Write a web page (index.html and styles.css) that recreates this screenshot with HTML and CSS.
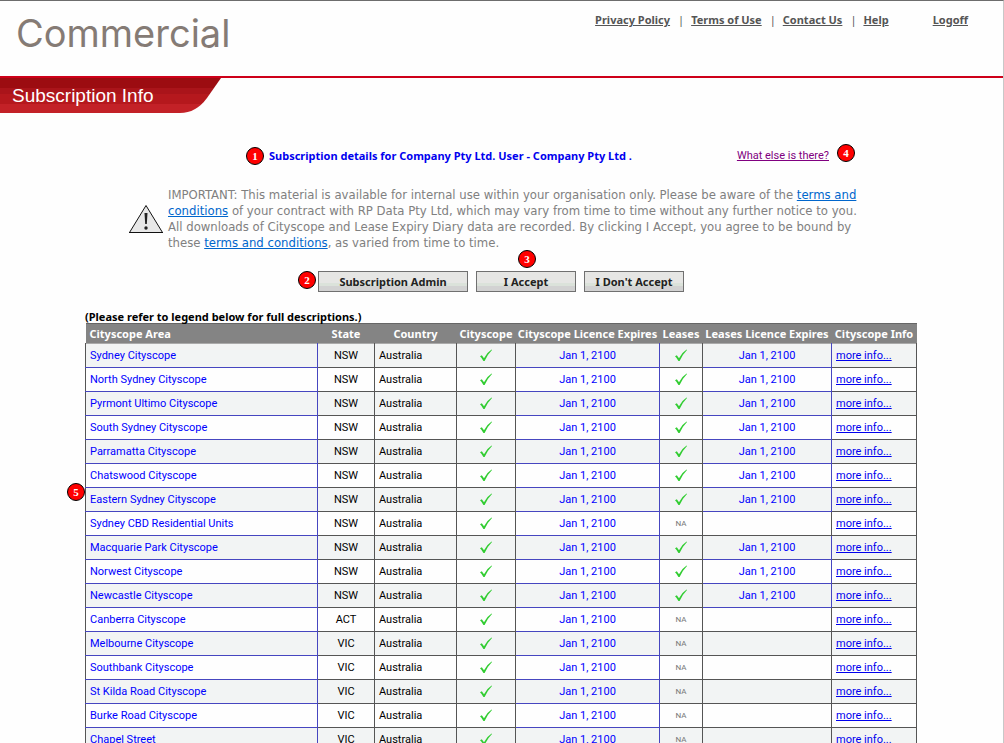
FILE: index.html
```html
<!DOCTYPE html>
<html lang="en">
  <head>
    <meta charset="utf-8">
    <title>Subscription Info</title>
    <link rel="stylesheet" href="styles.css">
  </head>
  <body>
    <svg class="sprite" aria-hidden="true">
      <symbol id="tick" viewBox="0 0 14 13">
        <path d="M1 7.2 2.8 6.2 5 9.2Q8 3.5 12.6 .6L13 1Q8.500 5.500 5.600 12H4.400Q3 9 1 7.200Z" fill="#32cd32" />
      </symbol>
    </svg>

    <header class="header">
      <div class="logo">Commercial</div>
      <nav class="nav">
        <a href="#">Privacy Policy</a>
        <span>|</span>
        <a href="#">Terms of Use</a>
        <span>|</span>
        <a href="#">Contact Us</a>
        <span>|</span>
        <a href="#">Help</a>
        <a class="logoff" href="#">Logoff</a>
      </nav>
    </header>

    <h1 class="page-tab">Subscription Info</h1>

    <main class="container">
      <div class="details">
        <h2><span class="badge left">1</span>Subscription details for Company Pty Ltd. User - Company Pty Ltd .</h2>
        <a href="#">What else is there?<span class="badge right">4</span></a>
      </div>

      <div class="notice">
        <svg width="36" height="31" viewBox="0 0 36 31" aria-hidden="true">
          <path d="M18 1.500 34.500 28.500H1.500Z" fill="#e8e8e8" stroke="#111" />
          <path d="M1 28.500H35" stroke="#111" stroke-width="1" />
          <path d="M16.500 9h3l-.7 11h-1.600z" fill="#222" />
          <circle cx="18" cy="24" r="1.700" fill="#222" />
        </svg>
        <p>IMPORTANT: This material is available for internal use within your organisation only. Please be aware of the <a href="#">terms and conditions</a> of your contract with RP Data Pty Ltd, which may vary from time to time without any further notice to you. All downloads of Cityscope and Lease Expiry Diary data are recorded. By clicking I Accept, you agree to be bound by these <a href="#">terms and conditions</a>, as varied from time to time.</p>
      </div>

      <div class="actions">
        <button class="wide" type="button"><span class="badge left">2</span>Subscription Admin</button>
        <button type="button"><span class="badge above">3</span>I Accept</button>
        <button type="button">I Don't Accept</button>
      </div>

      <table class="areas">
        <caption>(Please refer to legend below for full descriptions.)</caption>
        <colgroup>
          <col class="col-area"><col class="col-state"><col class="col-country"><col class="col-city">
          <col class="col-expires"><col class="col-leases"><col class="col-lease-expires"><col class="col-info">
        </colgroup>
        <thead>
          <tr><th class="area">Cityscope Area</th><th>State</th><th>Country</th><th>Cityscope</th><th>Cityscope Licence Expires</th><th>Leases</th><th>Leases Licence Expires</th><th>Cityscope Info</th></tr>
        </thead>
        <tbody>
          <tr><td class="area">Sydney Cityscope</td><td>NSW</td><td class="country">Australia</td><td><svg class="tick"><use href="#tick" /></svg></td><td class="date">Jan 1, 2100</td><td><svg class="tick"><use href="#tick" /></svg></td><td class="date">Jan 1, 2100</td><td class="info"><a href="#">more info...</a></td></tr>
          <tr><td class="area">North Sydney Cityscope</td><td>NSW</td><td class="country">Australia</td><td><svg class="tick"><use href="#tick" /></svg></td><td class="date">Jan 1, 2100</td><td><svg class="tick"><use href="#tick" /></svg></td><td class="date">Jan 1, 2100</td><td class="info"><a href="#">more info...</a></td></tr>
          <tr><td class="area">Pyrmont Ultimo Cityscope</td><td>NSW</td><td class="country">Australia</td><td><svg class="tick"><use href="#tick" /></svg></td><td class="date">Jan 1, 2100</td><td><svg class="tick"><use href="#tick" /></svg></td><td class="date">Jan 1, 2100</td><td class="info"><a href="#">more info...</a></td></tr>
          <tr><td class="area">South Sydney Cityscope</td><td>NSW</td><td class="country">Australia</td><td><svg class="tick"><use href="#tick" /></svg></td><td class="date">Jan 1, 2100</td><td><svg class="tick"><use href="#tick" /></svg></td><td class="date">Jan 1, 2100</td><td class="info"><a href="#">more info...</a></td></tr>
          <tr><td class="area">Parramatta Cityscope</td><td>NSW</td><td class="country">Australia</td><td><svg class="tick"><use href="#tick" /></svg></td><td class="date">Jan 1, 2100</td><td><svg class="tick"><use href="#tick" /></svg></td><td class="date">Jan 1, 2100</td><td class="info"><a href="#">more info...</a></td></tr>
          <tr><td class="area">Chatswood Cityscope</td><td>NSW</td><td class="country">Australia</td><td><svg class="tick"><use href="#tick" /></svg></td><td class="date">Jan 1, 2100</td><td><svg class="tick"><use href="#tick" /></svg></td><td class="date">Jan 1, 2100</td><td class="info"><a href="#">more info...</a></td></tr>
          <tr><td class="area"><span class="badge row">5</span>Eastern Sydney Cityscope</td><td>NSW</td><td class="country">Australia</td><td><svg class="tick"><use href="#tick" /></svg></td><td class="date">Jan 1, 2100</td><td><svg class="tick"><use href="#tick" /></svg></td><td class="date">Jan 1, 2100</td><td class="info"><a href="#">more info...</a></td></tr>
          <tr><td class="area">Sydney CBD Residential Units</td><td>NSW</td><td class="country">Australia</td><td><svg class="tick"><use href="#tick" /></svg></td><td class="date">Jan 1, 2100</td><td class="na">NA</td><td></td><td class="info"><a href="#">more info...</a></td></tr>
          <tr><td class="area">Macquarie Park Cityscope</td><td>NSW</td><td class="country">Australia</td><td><svg class="tick"><use href="#tick" /></svg></td><td class="date">Jan 1, 2100</td><td><svg class="tick"><use href="#tick" /></svg></td><td class="date">Jan 1, 2100</td><td class="info"><a href="#">more info...</a></td></tr>
          <tr><td class="area">Norwest Cityscope</td><td>NSW</td><td class="country">Australia</td><td><svg class="tick"><use href="#tick" /></svg></td><td class="date">Jan 1, 2100</td><td><svg class="tick"><use href="#tick" /></svg></td><td class="date">Jan 1, 2100</td><td class="info"><a href="#">more info...</a></td></tr>
          <tr><td class="area">Newcastle Cityscope</td><td>NSW</td><td class="country">Australia</td><td><svg class="tick"><use href="#tick" /></svg></td><td class="date">Jan 1, 2100</td><td><svg class="tick"><use href="#tick" /></svg></td><td class="date">Jan 1, 2100</td><td class="info"><a href="#">more info...</a></td></tr>
          <tr><td class="area">Canberra Cityscope</td><td>ACT</td><td class="country">Australia</td><td><svg class="tick"><use href="#tick" /></svg></td><td class="date">Jan 1, 2100</td><td class="na">NA</td><td></td><td class="info"><a href="#">more info...</a></td></tr>
          <tr><td class="area">Melbourne Cityscope</td><td>VIC</td><td class="country">Australia</td><td><svg class="tick"><use href="#tick" /></svg></td><td class="date">Jan 1, 2100</td><td class="na">NA</td><td></td><td class="info"><a href="#">more info...</a></td></tr>
          <tr><td class="area">Southbank Cityscope</td><td>VIC</td><td class="country">Australia</td><td><svg class="tick"><use href="#tick" /></svg></td><td class="date">Jan 1, 2100</td><td class="na">NA</td><td></td><td class="info"><a href="#">more info...</a></td></tr>
          <tr><td class="area">St Kilda Road Cityscope</td><td>VIC</td><td class="country">Australia</td><td><svg class="tick"><use href="#tick" /></svg></td><td class="date">Jan 1, 2100</td><td class="na">NA</td><td></td><td class="info"><a href="#">more info...</a></td></tr>
          <tr><td class="area">Burke Road Cityscope</td><td>VIC</td><td class="country">Australia</td><td><svg class="tick"><use href="#tick" /></svg></td><td class="date">Jan 1, 2100</td><td class="na">NA</td><td></td><td class="info"><a href="#">more info...</a></td></tr>
          <tr><td class="area">Chapel Street</td><td>VIC</td><td class="country">Australia</td><td><svg class="tick"><use href="#tick" /></svg></td><td class="date">Jan 1, 2100</td><td class="na">NA</td><td></td><td class="info"><a href="#">more info...</a></td></tr>
        </tbody>
      </table>
    </main>
  </body>
</html>
```
FILE: styles.css
```css
* {
  box-sizing: border-box;
}

body {
  margin: 0;
  height: 100vh;
  overflow: hidden;
  border-top: 1px solid #6d6d6d;
  border-right: 1px solid #c8c8c8;
  background: #fefefe;
  color: #000;
  font-family: "Noto Sans", Tahoma, sans-serif;
  font-size: 11px;
  line-height: 16px;
}

.sprite {
  display: none;
}

.header {
  display: flex;
  justify-content: space-between;
  align-items: flex-start;
  height: 77px;
  padding: 11px 35px 0 16px;
  border-bottom: 2px solid #ce0019;
}

.logo {
  font-family: Inter, sans-serif;
  font-size: 38px;
  font-weight: 400;
  line-height: 42px;
  color: #857b75;
}

.nav {
  display: flex;
  gap: 7px;
  color: #555;
}

.nav a {
  color: #555;
  font-weight: bold;
}

.nav span {
  margin-left: 1px;
}

.nav .logoff {
  margin-left: 37px;
}

.page-tab {
  width: 221px;
  height: 35px;
  margin: 0;
  padding-left: 12px;
  background: linear-gradient(#9c0c11 10px, #aa141a 10px 16px, #b5181d 16px 26px, #c32127 26px);
  clip-path: path("M0 0H221L207 20Q196 35 180 35H0Z");
  color: #fff;
  font-family: "Liberation Sans", Arial, sans-serif;
  font-size: 19px;
  font-weight: normal;
  line-height: 35px;
}

.container {
  max-width: 833px;
  margin: 35px auto 0;
}

.details {
  display: flex;
  justify-content: space-between;
  padding: 0 89px 0 184px;
}

.details h2 {
  position: relative;
  margin: 0;
  color: #0000ee;
  font-size: 11px;
}

.details a {
  position: relative;
  color: #800080;
  font-family: Roboto, Tahoma, sans-serif;
}

.badge {
  position: absolute;
  width: 18px;
  height: 18px;
  border: 1px solid #000;
  border-radius: 50%;
  background: #f00;
  color: #fff;
  font-family: "Liberation Serif", serif;
  font-size: 11px;
  font-weight: bold;
  line-height: 16px;
  text-align: center;
}

.badge.left {
  left: -23px;
  top: -1px;
}

.badge.right {
  right: -26px;
  top: -4px;
}

.badge.above {
  left: 41px;
  top: -22px;
}

.badge.row {
  left: -19px;
  top: -5px;
}

.notice {
  display: flex;
  align-items: center;
  gap: 4px;
  margin: 23px 43px 0;
}

.notice svg {
  flex-shrink: 0;
}

.notice p {
  margin: 0;
  color: #808080;
  font-family: "DejaVu Sans Condensed", Tahoma, sans-serif;
  font-size: 13px;
}

.notice a {
  color: #0066cc;
}

.actions {
  display: flex;
  justify-content: center;
  gap: 8px;
  max-width: 832px;
  margin: 20px 0 17px;
}

button {
  position: relative;
  width: 100px;
  height: 21px;
  padding: 0;
  border: 1px solid #707070;
  background: linear-gradient(#e6e6e4 60%, #dbe2da 60% 75%, #d2d2d2 75%);
  color: #222;
  font: bold 11px "Noto Sans", Tahoma, sans-serif;
}

button.wide {
  width: 150px;
}

button .badge.left {
  left: -21px;
  top: -1px;
}

.areas {
  width: 100%;
  max-width: 832px;
  border-collapse: collapse;
  table-layout: fixed;
}

.areas caption {
  height: 14px;
  font-weight: bold;
  text-align: left;
}

.col-area {
  width: 232px;
}

.col-state {
  width: 57px;
}

.col-country {
  width: 82px;
}

.col-city {
  width: 59px;
}

.col-expires {
  width: 144px;
}

.col-leases {
  width: 43px;
}

.col-lease-expires {
  width: 129px;
}

th {
  height: 20px;
  padding: 0;
  border-top: 1px solid #666;
  background: #848484;
  color: #fff;
  white-space: nowrap;
}

td {
  position: relative;
  height: 24px;
  padding: 0;
  border: 1px solid #555;
  font-family: Roboto, Tahoma, sans-serif;
  text-align: center;
}

tbody tr:nth-child(odd) {
  background: #f2f4f4;
}

.area,
.country,
.info {
  padding-left: 4px;
  text-align: left;
}

td.area,
td.date {
  border-color: #4646c0;
  color: #00f;
}

td.area {
  border-left-color: #555;
}

tbody tr:first-child td {
  border-top-color: #aaa;
}

.info a {
  color: #00e;
}

.na {
  color: #777;
  font-size: 8px;
}

.tick {
  display: block;
  width: 14px;
  height: 13px;
  margin: 0 auto;
}
```
